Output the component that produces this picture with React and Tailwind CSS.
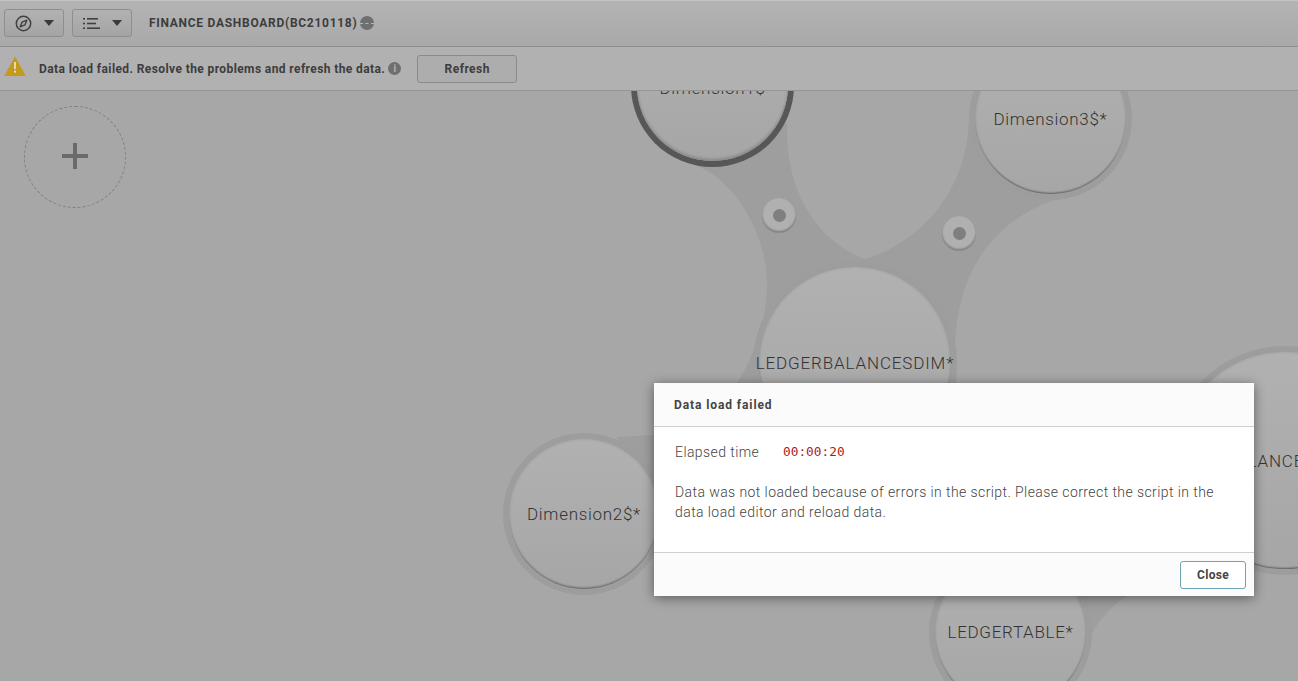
import React from "react";

const sans = "font-['Roboto','Liberation_Sans',sans-serif]";

function Caret() {
  return <span className="w-0 h-0 border-l-[5px] border-r-[5px] border-t-[6px] border-l-transparent border-r-transparent border-t-[#3b3b3b]" />;
}

function Compass() {
  return (
    <svg width="17" height="17" viewBox="0 0 17 17" fill="none">
      <circle cx="8.5" cy="8.5" r="7.2" stroke="#404040" strokeWidth="1.5" />
      <path d="M11.8 5.2 9.9 9.9 5.2 11.8 7.1 7.1Z" stroke="#404040" strokeWidth="1.4" strokeLinejoin="round" />
    </svg>
  );
}

function ListIcon() {
  return (
    <svg width="17" height="11" viewBox="0 0 17 11" fill="#404040">
      <rect x="0" y="0" width="2" height="1.6" />
      <rect x="4" y="0" width="11" height="1.6" />
      <rect x="0" y="4.7" width="2" height="1.6" />
      <rect x="4" y="4.7" width="9" height="1.6" />
      <rect x="0" y="9.4" width="2" height="1.6" />
      <rect x="4" y="9.4" width="13" height="1.6" />
    </svg>
  );
}

function Node({ className, label, selected }) {
  return (
    <div
      className={`absolute rounded-full flex items-center justify-center whitespace-nowrap bg-gradient-to-b from-[#b1b1b1] to-[#a6a6a6] text-[#333333] text-[17px] font-light ${sans} ${
        selected
          ? "shadow-[inset_0_-2px_3px_rgba(0,0,0,0.18),0_0_0_6px_#575757]"
          : "shadow-[inset_0_-2px_2px_-1px_rgba(0,0,0,0.4),inset_0_0_3px_rgba(0,0,0,0.12),0_0_0_6px_#9d9d9d]"
      } ${className}`}
    >
      {label}
    </div>
  );
}

function Dot({ className }) {
  return (
    <div className={`absolute w-[34px] h-[34px] rounded-full bg-[#b0b0b0] flex items-center justify-center shadow-[inset_0_-1px_2px_rgba(0,0,0,0.3),0_1px_1px_rgba(0,0,0,0.15)] ${className}`}>
      <span className="w-[13px] h-[13px] rounded-full bg-[#7f7f7f]" />
    </div>
  );
}

export default function App() {
  return (
    <div className={`relative w-full h-[681px] overflow-hidden flex flex-col bg-[#a7a7a7] ${sans}`}>
      <header className="relative z-10 h-[47px] shrink-0 flex items-center bg-gradient-to-b from-[#b4b4b4] to-[#a9a9a9] border-t border-t-[#c4c4c4] border-b border-b-[#8f8f8f] pl-1 pb-[1px]">
        <button className="w-[60px] h-[28px] flex items-center justify-center gap-[12px] rounded-[3px] border border-[#8e8e8e] bg-gradient-to-b from-[#b2b2b2] to-[#a4a4a4]">
          <Compass />
          <Caret />
        </button>
        <button className="ml-2 w-[60px] h-[28px] flex items-center justify-center gap-[12px] rounded-[3px] border border-[#8e8e8e] bg-gradient-to-b from-[#b2b2b2] to-[#a4a4a4]">
          <ListIcon />
          <Caret />
        </button>
        <span className="ml-[17px] text-[12px] font-bold text-[#3d3d3d] tracking-[0.72px] whitespace-nowrap">FINANCE DASHBOARD(BC210118)</span>
        <span className="ml-[3px] w-[14px] h-[14px] rounded-full bg-[#6f6f6f] flex items-center justify-center">
          <span className="w-[14px] border-t border-dashed border-[#b5b5b5]" />
        </span>
      </header>

      <div className="relative z-10 h-[44px] shrink-0 flex items-center bg-[#b1b1b1] border-b border-b-[#959595] pl-1">
        <svg width="22" height="20" viewBox="0 0 22 20" className="mb-[5px]">
          <path d="M11 0.5 21.8 20H0.2Z" fill="#c39a1c" />
          <rect x="10" y="6" width="2" height="7" fill="#e3d9b5" />
          <rect x="10" y="14.5" width="2" height="2.2" fill="#e3d9b5" />
        </svg>
        <span className="ml-[13px] text-[12px] font-bold text-[#3d3d3d] tracking-[0.4px] whitespace-nowrap">Data load failed. Resolve the problems and refresh the data.</span>
        <span className="ml-[3px] w-[13px] h-[13px] rounded-full bg-[#6f6f6f] flex items-center justify-center text-[10px] leading-none font-bold text-[#b1b1b1]">i</span>
        <button className="ml-4 w-[100px] h-[28px] rounded-[3px] border border-[#8a8a8a] bg-[#adadad] text-[12px] font-bold text-[#3d3d3d] tracking-[0.45px]">Refresh</button>
      </div>

      <main className="relative flex-1 overflow-hidden">
        <svg className="absolute left-0 top-[-91px]" width="1298" height="681" viewBox="0 0 1298 681">
          <path
            fill="#9e9e9e"
            d="M697 166C735 180 767 235 767 283C767 320 755 355 737 383C715 420 680 434 654 435L617 437L640 520L700 580L940 590L1000 640L1083 660C1088 632 1105 610 1127 596L1200 500L1200 420L957 383C947 300 975 225 1060 198L969 113C970 190 920 243 865 259C815 240 785 190 787 123Z"
          />
        </svg>

        <div className="absolute left-[24px] top-[15px] w-[102px] h-[102px] rounded-full border border-dashed border-[#808080] flex items-center justify-center">
          <svg width="26" height="26" viewBox="0 0 26 26" fill="#6a6a6a" className="mb-[2px]">
            <rect x="11" y="0" width="4" height="26" />
            <rect x="0" y="11" width="26" height="4" />
          </svg>
        </div>

        <Node className="left-[637px] top-[-81px] w-[151px] h-[151px] pt-[6px] tracking-[0.7px]" label="Dimension1$" selected />
        <Node className="left-[975px] top-[-48px] w-[151px] h-[151px] pt-[2px] tracking-[0.7px]" label="Dimension3$*" />
        <Node className="left-[759px] top-[176px] w-[192px] h-[192px] pt-[2px] tracking-[0.85px]" label="LEDGERBALANCESDIM*" />
        <Node className="left-[509px] top-[348px] w-[150px] h-[150px] pt-[2px] tracking-[0.7px]" label="Dimension2$*" />
        <Node className="left-[935px] top-[466px] w-[151px] h-[151px] tracking-[0.7px]" label="LEDGERTABLE*" />
        <Node className="left-[1176px] top-[261px] w-[217px] h-[217px] pt-[2px] pr-[88px] tracking-[0.85px]" label="LEDGERBALANCES*" />
        <Dot className="left-[762px] top-[107px]" />
        <Dot className="left-[942px] top-[125px]" />
      </main>

      <div className={`absolute z-20 left-[654px] top-[383px] w-[600px] h-[213px] flex flex-col rounded-[2px] bg-white shadow-[0_2px_12px_rgba(0,0,0,0.45)] ${sans}`}>
        <div className="h-[44px] shrink-0 flex items-center px-5 pt-[1px] bg-[#fbfbfb] border-b border-[#cfcfcf] text-[12px] font-bold text-[#444] tracking-[0.9px]">Data load failed</div>
        <div className="flex-1 px-[21px] pt-[15px] text-[14px] leading-[20px] font-light text-[#444] tracking-[0.42px]">
          <div className="flex items-center">
            <span className="w-[108px]">Elapsed time</span>
            <span className="font-['DejaVu_Sans_Mono',monospace] text-[12.8px] tracking-normal text-[#a81c1c]">00:00:20</span>
          </div>
          <p className="mt-5">Data was not loaded because of errors in the script. Please correct the script in the data load editor and reload data.</p>
        </div>
        <div className="h-[44px] shrink-0 flex items-center justify-end pr-2 bg-[#fbfbfb] border-t border-[#cfcfcf]">
          <button className="w-[66px] h-[28px] rounded-[3px] border border-[#6fa3bb] bg-white text-[12px] font-bold text-[#444] tracking-[0.3px]">Close</button>
        </div>
      </div>
    </div>
  );
}
